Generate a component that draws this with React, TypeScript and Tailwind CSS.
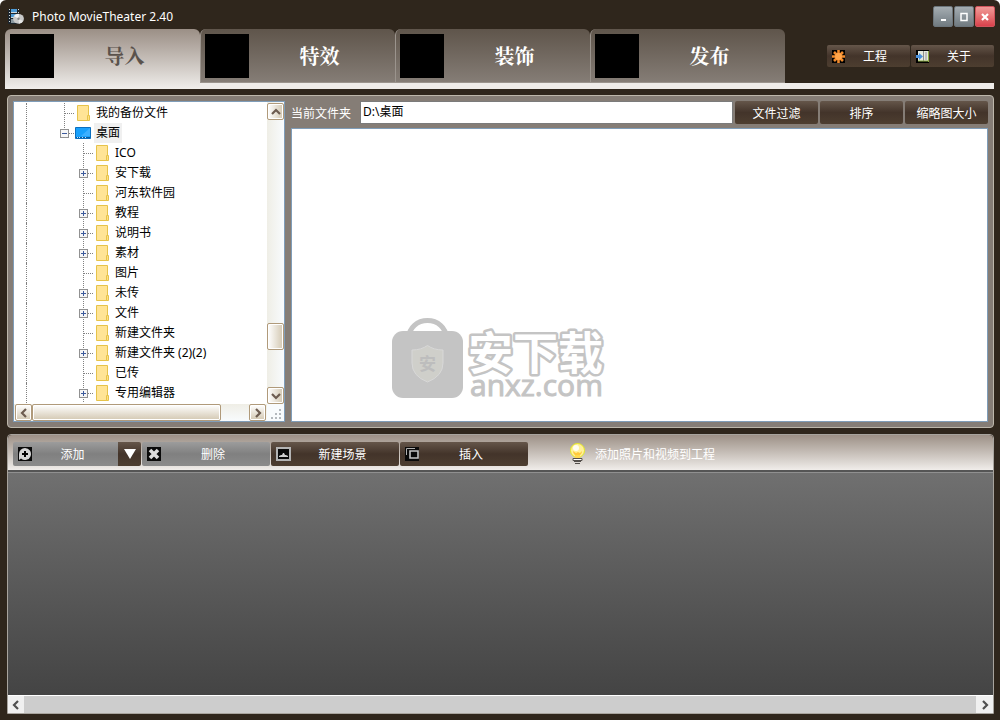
import React, { useState } from 'react';
import { clsx } from 'clsx';

interface TreeNode {
  name: string;
  level: 1 | 2;
  kind: 'folder' | 'desktop';
  state?: 'open' | 'closed';
  last?: boolean;
}

const tabs = ['导入', '特效', '装饰', '发布'];

const nodes: TreeNode[] = [
  { name: '我的备份文件', level: 1, kind: 'folder' },
  { name: '桌面', level: 1, kind: 'desktop', state: 'open', last: true },
  { name: 'ICO', level: 2, kind: 'folder' },
  { name: '安下载', level: 2, kind: 'folder', state: 'closed' },
  { name: '河东软件园', level: 2, kind: 'folder' },
  { name: '教程', level: 2, kind: 'folder', state: 'closed' },
  { name: '说明书', level: 2, kind: 'folder', state: 'closed' },
  { name: '素材', level: 2, kind: 'folder', state: 'closed' },
  { name: '图片', level: 2, kind: 'folder' },
  { name: '未传', level: 2, kind: 'folder', state: 'closed' },
  { name: '文件', level: 2, kind: 'folder', state: 'closed' },
  { name: '新建文件夹', level: 2, kind: 'folder' },
  { name: '新建文件夹 (2)(2)', level: 2, kind: 'folder', state: 'closed' },
  { name: '已传', level: 2, kind: 'folder' },
  { name: '专用编辑器', level: 2, kind: 'folder', state: 'closed' },
];

const brown = 'bg-linear-to-b from-[#65564a] via-[#43342a] via-50% to-[#4d3e30] text-white';
const gray = 'bg-linear-to-b from-[#9c9c9c] via-[#808080] via-50% to-[#8b8b8b] text-white';

/* ---------- icons ---------- */

const AppIcon = () => (
  <svg width="16" height="16" viewBox="0 0 16 16" aria-hidden="true">
    <path d="M0 0h11v15H0z" fill="#1d262e" />
    <path d="M3 0h6v4H3zM3 5h5v4H3z" fill="#4f9bd6" />
    <path d="M3 3h6v1H3zM3 8h5v1H3z" fill="#cfd8dc" />
    <path d="M3 10h4v4H3z" fill="#8a979f" />
    <path d="M1.500 0v15M10.500 0v5" stroke="#d8dde0" strokeDasharray="1 2" />
    <ellipse cx="10.500" cy="9.800" rx="5.400" ry="4.900" fill="#c9c9c9" />
    <path d="M10.500 9.800L6 7A5.400 4.900 0 0 1 11 4.900z" fill="#f4f4f4" />
    <path d="M10.500 9.800L15 12A5.400 4.900 0 0 1 11 14.700z" fill="#e8e8e8" />
    <circle cx="10.500" cy="9.800" r="1.200" fill="#888" />
  </svg>
);

const ProjectIcon = () => (
  <svg width="13" height="13" viewBox="0 0 13 13" aria-hidden="true">
    <path d="M0 0h13v13H0z" fill="#000" />
    <path d="M6.500 0v13M0 6.500h13M2 2l9 9M11 2l-9 9" stroke="#f08a2c" strokeWidth="2.600" />
    <circle cx="6.500" cy="6.500" r="3.400" fill="#ffa54a" />
  </svg>
);

const AboutIcon = () => (
  <svg width="13" height="13" viewBox="0 0 13 13" aria-hidden="true">
    <path d="M0 0h13v13H0z" fill="#000" />
    <path d="M2 1h5v10H2zM7 1h5v10H7z" fill="#e4e8dc" />
    <path d="M7 1h1v10H7z" fill="#8c8c8c" />
    <path d="M9 2h2v8H9z" fill="#bcbcbc" />
    <path d="M2 11h10M12.500 1v11" stroke="#8fae45" />
    <path d="M0 5h3V3l4 3.500L3 10V8H0z" fill="#4a90dc" />
  </svg>
);

const FolderIcon = () => (
  <svg width="16" height="16" viewBox="0 0 16 16" aria-hidden="true">
    <path d="M2.500.5h11v15h-11z" fill="#ffe496" stroke="#e6c34a" />
    <path d="M12.500 10.500h2v5h-2z" fill="#ffe084" stroke="#e6c34a" />
  </svg>
);

const DesktopIcon = () => (
  <svg width="16" height="16" viewBox="0 0 16 16" aria-hidden="true">
    <path d="M.5 2.500h15v11H.5z" fill="#18a0fb" stroke="#0b6fbf" />
    <path d="M15 3v8H6z" fill="#3db0ff" />
    <path d="M1 12.500h14" stroke="#0b5c9e" />
    <path d="M2 12.500h1M4 12.500h8" stroke="#bfe3ff" strokeDasharray="1 2" />
  </svg>
);

// dotted connector with the optional +/- box
const Branch = ({ state, last }: { state?: 'open' | 'closed'; last?: boolean }) => (
  <svg width="18" height="20" viewBox="0 0 18 20" shapeRendering="crispEdges" aria-hidden="true">
    <path d={last ? 'M7.500 0V10' : 'M7.500 0V20'} stroke="#808080" strokeDasharray="1 1" />
    <path d="M8 10.500H18" stroke="#808080" strokeDasharray="1 1" />
    {state && (
      <>
        <rect x="3.500" y="6.500" width="8" height="8" fill="#f6f6f6" stroke="#919191" />
        <path d="M5 10.500h5" stroke="#3c5a9c" />
        {state === 'closed' && <path d="M7.500 8v5" stroke="#3c5a9c" />}
      </>
    )}
  </svg>
);

const Arrow = ({ dir, color }: { dir: 'up' | 'down' | 'left' | 'right'; color: string }) => {
  const d = {
    up: 'M1 7l4-4 4 4',
    down: 'M1 3l4 4 4-4',
    left: 'M7 1L3 5l4 4',
    right: 'M3 1l4 4-4 4',
  }[dir];
  return (
    <svg width="10" height="10" viewBox="0 0 10 10" aria-hidden="true">
      <path d={d} fill="none" stroke={color} strokeWidth="2.200" />
    </svg>
  );
};

const AddIcon = () => (
  <svg width="14" height="14" viewBox="0 0 14 14" aria-hidden="true">
    <path d="M0 0h14v14H0z" fill="#0a0a0a" />
    <path d="M7 1a6 6 0 1 1-4 10.500L1 13V7a6 6 0 0 1 6-6z" fill="#d4d4d4" />
    <path d="M7 4v6M4 7h6" stroke="#000" strokeWidth="2" />
  </svg>
);

const DeleteIcon = () => (
  <svg width="14" height="14" viewBox="0 0 14 14" aria-hidden="true">
    <path d="M0 0h14v14H0z" fill="#0a0a0a" />
    <path d="M3 3l8 8M11 3l-8 8" stroke="#dcdcdc" strokeWidth="3.600" />
  </svg>
);

const SceneIcon = () => (
  <svg width="15" height="14" viewBox="0 0 15 14" aria-hidden="true">
    <path d="M1 1h13v12H1z" fill="#0a0a0a" stroke="#b4b4b4" strokeWidth="2" />
    <path d="M3 10V9l2-1h1l1-2h1l1 2h1l2 1v1z" fill="#cfcfcf" />
  </svg>
);

const InsertIcon = () => (
  <svg width="14" height="14" viewBox="0 0 14 14" aria-hidden="true">
    <path d="M0 0h14v14H0z" fill="#0a0a0a" />
    <path d="M1.500 8V1.500H10" fill="none" stroke="#b0b0b0" />
    <path d="M5 4h8v7H5z" fill="#0a0a0a" stroke="#c4c4c4" strokeWidth="1.600" />
  </svg>
);

const BulbIcon = () => (
  <svg width="17" height="22" viewBox="0 0 17 22" aria-hidden="true">
    <circle cx="8.500" cy="7.500" r="7" fill="#fff09a" stroke="#e3e820" />
    <path d="M4 8a4.500 5 0 0 0 9 0l-2 2-2-1-2 1z" fill="#ffc93c" />
    <circle cx="7" cy="5" r="3" fill="#fffdf0" />
    <path d="M6 12h5v3H6z" fill="#ffd84e" />
    <path d="M4 15.500h9v2H4zM5 18.500h7M6 20.500h5" fill="#fff" stroke="#55504c" />
  </svg>
);

const Watermark = () => (
  <svg width="216" height="84" viewBox="0 0 216 84" role="img" aria-label="安下载 anxz.com">
    <path d="M17 20a18.500 16.500 0 0 1 37 0" fill="none" stroke="#c4c4c4" strokeWidth="5" />
    <rect x="0" y="14" width="71" height="67" rx="11" fill="#c4c4c4" />
    <path d="M20 33q9 0 15.500-4.500Q42 33 51 33v13q0 13-15.500 19Q20 59 20 46z" fill="#cfcfca" stroke="#d8d8d8" />
    <text x="27" y="53" fontSize="17" fontWeight="700" fill="#bdbdbd" fontFamily="Noto Sans CJK SC, sans-serif">安</text>
    <text x="76" y="53" fontSize="45" fontWeight="700" fill="#fff" stroke="#c4c4c4" strokeWidth="5" strokeLinejoin="round" paintOrder="stroke" fontFamily="Noto Sans CJK SC, sans-serif">安下载</text>
    <text x="78" y="79" fontSize="30" fill="#c4c4c4" stroke="#c4c4c4" fontFamily="Open Sans, sans-serif">anxz.com</text>
  </svg>
);

/* ---------- parts ---------- */

const TitleBar = () => (
  <header className="flex h-[29px] items-center justify-between pt-1 pr-[5px] pl-2">
    <div className="flex items-center gap-2">
      <AppIcon />
      <h1 className="text-xs text-white">Photo MovieTheater 2.40</h1>
    </div>
    <div className="flex gap-px">
      <button aria-label="最小化" className="flex h-[21px] w-5 items-center justify-center rounded-xs border border-[#6c757b] bg-linear-to-b from-[#a5adb2] to-[#717b81]">
        <svg width="10" height="10" viewBox="0 0 10 10"><path d="M3 7h5v2H3z" fill="#fff" /></svg>
      </button>
      <button aria-label="最大化" className="flex h-[21px] w-5 items-center justify-center rounded-xs border border-[#6c757b] bg-linear-to-b from-[#a5adb2] to-[#717b81]">
        <svg width="10" height="10" viewBox="0 0 10 10"><path d="M2 1.500h6v7H2z" fill="none" stroke="#fff" strokeWidth="1.500" /></svg>
      </button>
      <button aria-label="关闭" className="flex h-[21px] w-5 items-center justify-center rounded-xs border border-[#d0545c] bg-linear-to-b from-[#f09a98] to-[#d8404c]">
        <svg width="10" height="10" viewBox="0 0 10 10"><path d="M2 2l6 6M8 2L2 8" stroke="#fff" strokeWidth="2.200" /></svg>
      </button>
    </div>
  </header>
);

const MenuButton = ({ icon, label }: { icon: React.ReactNode; label: string }) => (
  <button className={clsx('flex h-[22px] w-[83px] items-center rounded-xs px-[5px] text-xs', brown)}>
    {icon}
    <span className="flex-1 pt-0.5">{label}</span>
  </button>
);

const FilterButton = ({ label }: { label: string }) => (
  <button className={clsx('h-[23px] w-[83px] rounded-xs pt-0.5 text-xs', brown)}>{label}</button>
);

const ToolButton = ({ icon, label, tone }: { icon: React.ReactNode; label: string; tone: string }) => (
  <button className={clsx('flex h-6 w-32 items-center rounded-xs px-[5px] text-xs', tone)}>
    {icon}
    <span className="flex-1 pt-0.5">{label}</span>
  </button>
);

const xpButton = 'flex shrink-0 items-center justify-center rounded-xs border border-[#b09a7a] shadow-[inset_0_0_0_1px_#fff]';

const FolderTree = () => {
  const [selected, setSelected] = useState('桌面');

  return (
    <div className="grid w-[272px] shrink-0 grid-cols-[1fr_17px] grid-rows-[1fr_17px] border border-[#7f9db9] bg-white">
      <ul role="tree" className="h-[302px] overflow-hidden pt-px">
        {nodes.map(node => (
          <li key={node.name} role="treeitem" aria-selected={selected === node.name} className="flex h-5 items-center pl-3">
            <span className={clsx('h-5 shrink-0 border-l border-dotted border-[#808080]', node.level === 1 ? 'w-[31px]' : 'w-[50px]')} />
            <Branch state={node.state} last={node.last} />
            {node.kind === 'desktop' ? <DesktopIcon /> : <FolderIcon />}
            <button
              onClick={() => setSelected(node.name)}
              className={clsx('ml-[3px] h-5 px-0.5 text-xs whitespace-nowrap text-black', selected === node.name && 'bg-[#f0f0f0]')}
            >
              {node.name}
            </button>
          </li>
        ))}
      </ul>

      {/* vertical scrollbar */}
      <div className="flex flex-col bg-linear-to-r from-[#efeee6] to-[#f8fbfd] pt-px">
        <button aria-label="向上滚动" className={clsx(xpButton, 'h-[17px] bg-linear-to-r from-white to-[#d3c8b2]')}>
          <Arrow dir="up" color="#6d5c50" />
        </button>
        <div className="flex-1" />
        <div className={clsx(xpButton, 'h-[27px] bg-linear-to-r from-white to-[#d3c8b2]')} />
        <div className="h-[37px]" />
        <button aria-label="向下滚动" className={clsx(xpButton, 'h-[17px] bg-linear-to-r from-white to-[#d3c8b2]')}>
          <Arrow dir="down" color="#6d5c50" />
        </button>
      </div>

      {/* horizontal scrollbar */}
      <div className="flex bg-linear-to-b from-[#efeee6] to-[#f8fbfd] px-px">
        <button aria-label="向左滚动" className={clsx(xpButton, 'w-[17px] bg-linear-to-b from-white to-[#d3c8b2]')}>
          <Arrow dir="left" color="#6d5c50" />
        </button>
        <div className={clsx(xpButton, 'w-[189px] bg-linear-to-b from-white to-[#d3c8b2]')} />
        <div className="flex-1" />
        <button aria-label="向右滚动" className={clsx(xpButton, 'w-[17px] bg-linear-to-b from-white to-[#d3c8b2]')}>
          <Arrow dir="right" color="#6d5c50" />
        </button>
      </div>
      <svg width="17" height="17" viewBox="0 0 17 17" aria-hidden="true">
        <path d="M0 0h17v17H0z" fill="#f8fbfd" />
        <path d="M12 5h2v2h-2zM8 9h2v2H8zM12 9h2v2h-2zM4 13h2v2H4zM8 13h2v2H8zM12 13h2v2h-2z" fill="#b3b8bd" />
      </svg>
    </div>
  );
};

const App: React.FC = () => {
  const [activeTab, setActiveTab] = useState('导入');
  const [path, setPath] = useState('D:\\桌面');

  return (
    <div className="flex min-h-screen flex-col overflow-hidden rounded-t-md bg-[#2f261c] pb-1.5 font-['Noto_Sans','Noto_Sans_CJK_SC',sans-serif]">
      <TitleBar />

      {/* Main tabs */}
      <div className="pr-1.5 pl-[5px]">
        <nav className="flex bg-[linear-gradient(to_top,#efece9_6px,transparent_6px)]">
          {tabs.map(tab => (
            <button
              key={tab}
              onClick={() => setActiveTab(tab)}
              className={clsx(
                'flex w-[195px] items-start rounded-t-md p-[5px]',
                activeTab === tab
                  ? 'h-[60px] bg-linear-to-b from-[#9b8f86] to-[#f0eeeb] text-[#5a524c]'
                  : 'h-[54px] border-b border-l border-b-[#9b948d] border-l-[#9b948d] bg-linear-to-b from-[#5f554b] to-[#857d76] pl-1 text-white',
              )}
            >
              <span className="size-11 bg-black" />
              <span className="flex-1 font-['Noto_Serif_CJK_SC','Noto_Sans_CJK_SC',serif] text-xl leading-[44px] font-bold">{tab}</span>
            </button>
          ))}
          <div className="flex h-[54px] flex-1 items-center justify-end gap-px">
            <MenuButton icon={<ProjectIcon />} label="工程" />
            <MenuButton icon={<AboutIcon />} label="关于" />
          </div>
        </nav>
      </div>

      <main className="flex flex-1 flex-col gap-1.5 pt-1.5 pr-1.5 pl-[7px]">
        {/* Browser panel */}
        <section className="flex gap-1.5 rounded-sm border border-[#bdb7ab] bg-[#857d76] p-[5px]">
          <FolderTree />
          <div className="flex min-w-0 flex-1 flex-col gap-1">
            <div className="flex items-center gap-0.5">
              <label htmlFor="path" className="mr-[7px] pt-0.5 text-xs text-white">当前文件夹</label>
              <input
                id="path"
                type="text"
                value={path}
                onChange={e => setPath(e.target.value)}
                className="h-[23px] min-w-0 flex-1 border border-[#7b7b7b] bg-white px-0.5 pb-1 text-xs text-black outline-none"
              />
              <FilterButton label="文件过滤" />
              <FilterButton label="排序" />
              <FilterButton label="缩略图大小" />
            </div>
            <div className="flex flex-1 items-end border border-[#7f9db9] bg-white pb-5 pl-[100px]">
              <Watermark />
            </div>
          </div>
        </section>

        {/* Timeline panel */}
        <section className="flex flex-1 flex-col rounded-t-sm border border-[#a8a49e]">
          <div className="flex h-[37px] items-center gap-px rounded-t-sm border-b-2 border-[#555] bg-linear-to-b from-[#9d9187] to-[#f0edea] pt-[3px] pl-[5px]">
            <div className="flex">
              <button className={clsx('flex h-6 w-[105px] items-center rounded-l-xs px-[5px] text-xs', gray)}>
                <AddIcon />
                <span className="flex-1 pt-0.5">添加</span>
              </button>
              <button aria-label="更多添加选项" className={clsx('flex h-6 w-[23px] items-center justify-center rounded-r-xs', brown)}>
                <svg width="12" height="10" viewBox="0 0 12 10"><path d="M0 0h12L6 10z" fill="#fff" /></svg>
              </button>
            </div>
            <ToolButton icon={<DeleteIcon />} label="删除" tone={gray} />
            <ToolButton icon={<SceneIcon />} label="新建场景" tone={brown} />
            <ToolButton icon={<InsertIcon />} label="插入" tone={brown} />
            <p className="ml-10 flex items-center gap-[9px] text-xs text-white">
              <BulbIcon />
              <span className="pt-0.5">添加照片和视频到工程</span>
            </p>
          </div>
          <div className="flex-1 border-t border-[#909090] bg-linear-to-b from-[#707070] to-[#444444]" />
          <div className="flex h-[18px] border-t border-white bg-[#cdcdcd]">
            <button aria-label="向左滚动" className="flex w-4 items-center justify-center bg-[#f0f0f0]">
              <Arrow dir="left" color="#505050" />
            </button>
            <div className="flex-1" />
            <button aria-label="向右滚动" className="flex w-[17px] items-center justify-center bg-[#f0f0f0]">
              <Arrow dir="right" color="#505050" />
            </button>
          </div>
        </section>
      </main>
    </div>
  );
};

export default App;
